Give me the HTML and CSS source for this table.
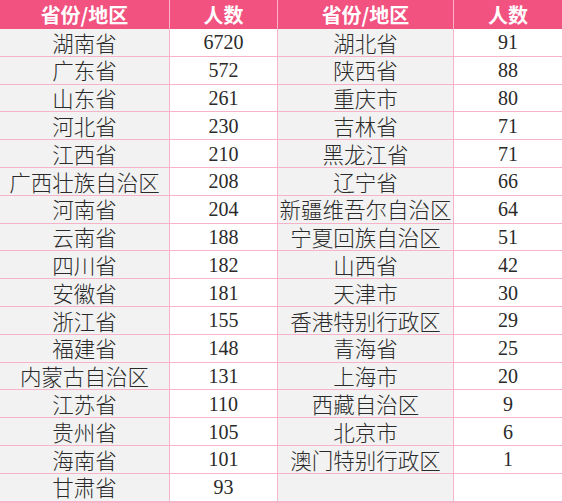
FILE: index.html
```html
<!DOCTYPE html>
<html lang="zh">
<head>
<meta charset="utf-8">
<link rel="stylesheet" href="styles.css">
</head>
<body>
<div class="table">
  <div class="th">省份/地区</div><div class="th">人数</div><div class="th">省份/地区</div><div class="th">人数</div>
  <div class="c name">湖南省</div><div class="c num">6720</div><div class="c name">湖北省</div><div class="c num">91</div>
  <div class="c name">广东省</div><div class="c num">572</div><div class="c name">陕西省</div><div class="c num">88</div>
  <div class="c name">山东省</div><div class="c num">261</div><div class="c name">重庆市</div><div class="c num">80</div>
  <div class="c name">河北省</div><div class="c num">230</div><div class="c name">吉林省</div><div class="c num">71</div>
  <div class="c name">江西省</div><div class="c num">210</div><div class="c name">黑龙江省</div><div class="c num">71</div>
  <div class="c name">广西壮族自治区</div><div class="c num">208</div><div class="c name">辽宁省</div><div class="c num">66</div>
  <div class="c name">河南省</div><div class="c num">204</div><div class="c name">新疆维吾尔自治区</div><div class="c num">64</div>
  <div class="c name">云南省</div><div class="c num">188</div><div class="c name">宁夏回族自治区</div><div class="c num">51</div>
  <div class="c name">四川省</div><div class="c num">182</div><div class="c name">山西省</div><div class="c num">42</div>
  <div class="c name">安徽省</div><div class="c num">181</div><div class="c name">天津市</div><div class="c num">30</div>
  <div class="c name">浙江省</div><div class="c num">155</div><div class="c name">香港特别行政区</div><div class="c num">29</div>
  <div class="c name">福建省</div><div class="c num">148</div><div class="c name">青海省</div><div class="c num">25</div>
  <div class="c name">内蒙古自治区</div><div class="c num">131</div><div class="c name">上海市</div><div class="c num">20</div>
  <div class="c name">江苏省</div><div class="c num">110</div><div class="c name">西藏自治区</div><div class="c num">9</div>
  <div class="c name">贵州省</div><div class="c num">105</div><div class="c name">北京市</div><div class="c num">6</div>
  <div class="c name">海南省</div><div class="c num">101</div><div class="c name">澳门特别行政区</div><div class="c num">1</div>
  <div class="c name">甘肃省</div><div class="c num">93</div><div class="c name"></div><div class="c num"></div>
</div>
</body>
</html>
```

FILE: styles.css
```css
html, body {
  margin: 0;
  padding: 0;
  background: #ffffff;
}
.table {
  width: 562px;
  display: grid;
  grid-template-columns: 169px 107px 175px 108px;
  grid-template-rows: 28px repeat(17, 26.8px);
  column-gap: 1px;
  row-gap: 1px;
  background: #f6b3c9;
  overflow: hidden;
  height: 503px;
  align-content: start;
}
.th {
  background: #f2527f;
  color: #ffffff;
  font-family: "Noto Sans CJK SC", "Noto Sans", sans-serif;
  font-weight: 700;
  font-size: 20px;
  display: flex;
  align-items: center;
  justify-content: center;
  line-height: 1;
  margin-bottom: -1px;
}
.c {
  display: flex;
  align-items: center;
  justify-content: center;
  color: #2a2a2a;
  line-height: 1;
  white-space: nowrap;
}
.name {
  background: #f2f2f2;
  font-family: "Noto Sans CJK SC", sans-serif;
  font-weight: 300;
  font-size: 21.5px;
}
.num {
  background: #ffffff;
  font-family: "Liberation Serif", serif;
  font-size: 20px;
}
```
